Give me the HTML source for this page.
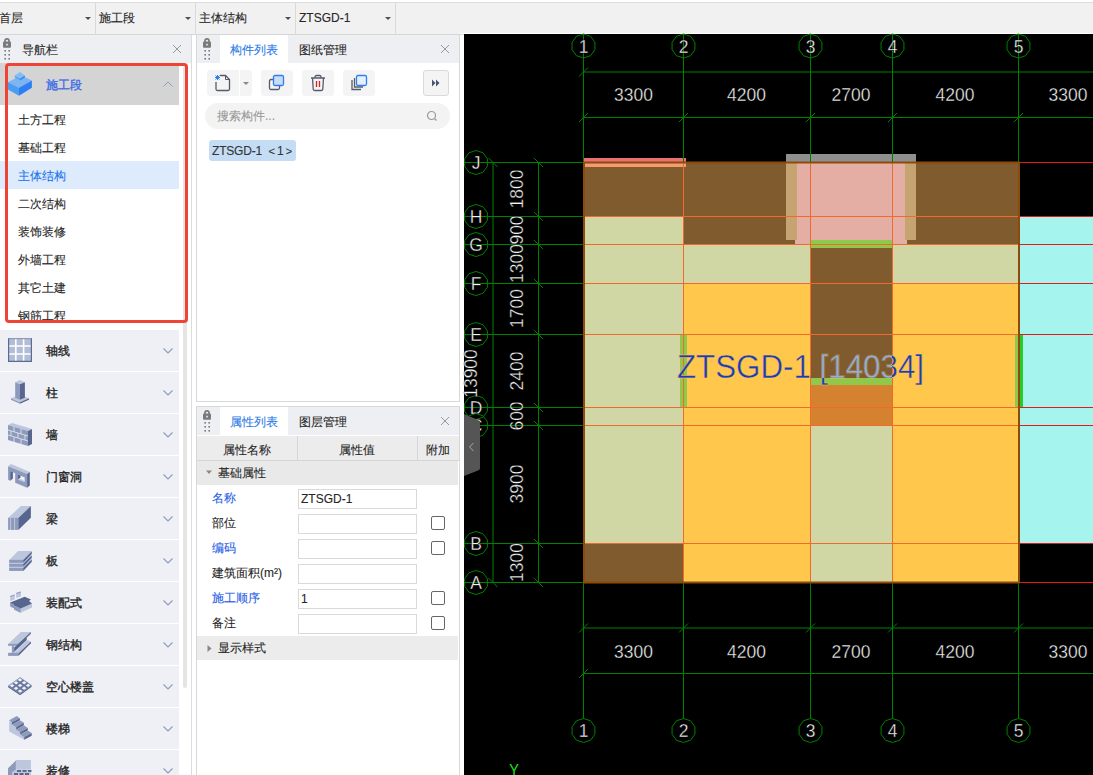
<!DOCTYPE html>
<html><head><meta charset="utf-8">
<style>
*{box-sizing:border-box;margin:0;padding:0}
html,body{width:1093px;height:775px;overflow:hidden;background:#fff;font-family:"Liberation Sans",sans-serif;font-size:12px;color:#262626;-webkit-text-stroke:0.1px}
.a{position:absolute}
.cv{position:absolute;left:0;top:0}
.tb{left:0;top:2px;width:1093px;height:33px;background:#f1f1f1;border-top:1px solid #dcdcdc;border-bottom:1px solid #d6d6d6}
.dv{top:0;width:1px;height:32px;background:#dadada}
.tt{top:0;height:32px;line-height:31px;white-space:nowrap}
.arr{width:0;height:0;border-left:3px solid transparent;border-right:3px solid transparent;border-top:3px solid #4a5060}
.hdr{height:28px;background:#eeeff2}
.lock{width:8px;height:9px}
.x{font-size:16px;color:#888;line-height:16px}
.li{left:0;width:179px;height:28px;line-height:28px;padding-top:1px;padding-left:18px;color:#262626}
.cat{left:0;width:179px;height:41px;background:#eff0f5}
.cat .t{position:absolute;left:46px;top:1px;line-height:41px;color:#262626;-webkit-text-stroke:0.35px #262626}
.chev{position:absolute;left:163px;width:10px;height:6px}
.btn{background:#f4f4f4;border-radius:3px}
.row{left:197px;width:262px;height:25px}
.lbl{position:absolute;left:15px;top:1px;line-height:25px}
.inp{position:absolute;left:101px;top:4px;width:119px;height:20px;border:1px solid #d9d9d9;background:#fff;line-height:19px;padding-left:2px}
.cb{position:absolute;left:234px;top:6px;width:14px;height:14px;border:1px solid #666;border-radius:2px;background:#fff}
.blue{color:#2a5fe6}
</style></head><body>
<!-- toolbar -->
<div class="a tb">
  <div class="a tt" style="left:-1px">首层</div>
  <div class="a arr" style="left:85px;top:14px"></div>
  <div class="a dv" style="left:95px"></div>
  <div class="a tt" style="left:99px">施工段</div>
  <div class="a arr" style="left:185px;top:14px"></div>
  <div class="a dv" style="left:195px"></div>
  <div class="a tt" style="left:199px">主体结构</div>
  <div class="a arr" style="left:285px;top:14px"></div>
  <div class="a dv" style="left:295px"></div>
  <div class="a tt" style="left:299px">ZTSGD-1</div>
  <div class="a arr" style="left:385px;top:14px"></div>
  <div class="a dv" style="left:395px"></div>
</div>

<!-- nav panel -->
<div class="a" style="left:191px;top:35px;width:1px;height:740px;background:#dcdcdc"></div>
<div class="a hdr" style="left:0;top:35px;width:191px"></div>
<svg class="a" style="left:2px;top:37px" width="12" height="26" viewBox="0 0 12 26">
 <path d="M3,5 V3.8 A2,2 0 0 1 7,3.8 V5" fill="none" stroke="#7a7a7a" stroke-width="1.7"/>
 <rect x="1" y="4.5" width="8" height="6.2" rx="1" fill="#7a7a7a"/><rect x="4.2" y="6.8" width="1.6" height="1.6" fill="#eee"/>
 <g fill="#7a7a7a"><rect x="2.4" y="13" width="1.6" height="1.6"/><rect x="6.4" y="13" width="1.6" height="1.6"/><rect x="2.4" y="17" width="1.6" height="1.6"/><rect x="6.4" y="17" width="1.6" height="1.6"/><rect x="2.4" y="21" width="1.6" height="1.6"/><rect x="6.4" y="21" width="1.6" height="1.6"/></g>
</svg>
<div class="a" style="left:22px;top:36px;line-height:28px">导航栏</div>
<svg class="a" style="left:172px;top:44px" width="10" height="10"><path d="M1,1 L9,9 M9,1 L1,9" stroke="#999" stroke-width="1"/></svg>

<div class="a" style="left:0;top:63px;width:179px;height:42px;background:#d4d4d4"></div>
<svg class="a" style="left:8px;top:72px" width="25" height="25" viewBox="0 0 25 25">
 <polygon points="0,10.3 12.9,3.2 23.9,8.6 11,15.7" fill="#7cb5f1"/>
 <polygon points="0,10.3 11,15.7 11,23.8 0,17.4" fill="#4c9cf1"/>
 <polygon points="11,15.7 23.9,8.6 23.9,15.7 11,23.8" fill="#2c7ff2"/>
 <polygon points="6.8,3.5 12,0 16.8,3.5 12,6.7" fill="#86bcf4"/>
 <polygon points="6.8,3.5 12,6.7 12,8.6 6.8,5.4" fill="#5aa4f2"/>
 <polygon points="12,6.7 16.8,3.5 16.8,5.4 12,8.6" fill="#3385f1"/>
</svg>
<div class="a" style="left:46px;top:64px;line-height:42px;color:#3d6ce6;font-size:12px;-webkit-text-stroke:0.35px #3d6ce6">施工段</div>
<svg class="a chev" style="top:81px" viewBox="0 0 10 6"><path d="M0.5,5.5 L5,1 L9.5,5.5" fill="none" stroke="#8c9cbc" stroke-width="1"/></svg>

<div class="a li" style="top:105px">土方工程</div>
<div class="a li" style="top:133px">基础工程</div>
<div class="a li" style="top:161px;background:#ddebfd;color:#1b72ee">主体结构</div>
<div class="a li" style="top:189px">二次结构</div>
<div class="a li" style="top:217px">装饰装修</div>
<div class="a li" style="top:245px">外墙工程</div>
<div class="a li" style="top:273px">其它土建</div>
<div class="a" style="left:0;top:301px;width:179px;height:21px;overflow:hidden"><div class="li" style="position:absolute;top:0">钢筋工程</div></div>

<div class="a" style="left:183px;top:66px;width:4px;height:622px;background:#e5e5e5;border-radius:2px"></div>

<div class="a cat" style="top:330px"><svg class="a" style="left:8px;top:8px" width="25" height="25" viewBox="0 0 25 25"><rect x="0" y="0" width="23.5" height="24" fill="#b3bdd6"/><path d="M7.8,1 V23 M15.6,1 V23 M1,8 H23 M1,16 H23" stroke="#fff" stroke-width="1.6"/><path d="M0.6,0 V23.4 H23.4 V0" stroke="#5a6a94" stroke-width="1.2" fill="none"/><path d="M0.6,0.6 H23.4" stroke="#8d9abb" stroke-width="1.2"/></svg><div class="t">轴线</div><svg class="chev" style="top:18px" viewBox="0 0 10 6"><path d="M0.5,0.5 L5,5 L9.5,0.5" fill="none" stroke="#8c9cbc" stroke-width="1.1"/></svg></div>
<div class="a cat" style="top:372px"><svg class="a" style="left:8px;top:8px" width="25" height="25" viewBox="0 0 25 25"><polygon points="3,18.3 11.9,14.8 21,18.3 11.9,22.2" fill="#bcc6dc"/><polygon points="3,18.3 11.9,22.2 11.9,23.7 3,19.8" fill="#8d9abb"/><polygon points="11.9,22.2 21,18.3 21,19.8 11.9,23.7" fill="#56668f"/><polygon points="7.2,2.2 11.9,0.1 16.9,2.2 11.9,4.3" fill="#bcc6dc"/><polygon points="7.2,2.2 11.9,4.3 11.9,19.8 7.2,17.7" fill="#8d9abb"/><polygon points="11.9,4.3 16.9,2.2 16.9,17.7 11.9,19.8" fill="#56668f"/></svg><div class="t">柱</div><svg class="chev" style="top:18px" viewBox="0 0 10 6"><path d="M0.5,0.5 L5,5 L9.5,0.5" fill="none" stroke="#8c9cbc" stroke-width="1.1"/></svg></div>
<div class="a cat" style="top:414px"><svg class="a" style="left:8px;top:8px" width="25" height="25" viewBox="0 0 25 25"><polygon points="0,3 4,1 24,7 20,9" fill="#bcc6dc"/><polygon points="0,3 20,9 20,24 0,18" fill="#8d9abb"/><polygon points="20,9 24,7 24,22 20,24" fill="#56668f"/><path d="M0,8 L20,14 M0,13 L20,19 M6,5 V10 M13,7 V12 M3,9 V14 M10,11 V16 M17,13 V18 M6,15 V20 M13,17 V22" stroke="#dfe3ee" stroke-width="0.9"/></svg><div class="t">墙</div><svg class="chev" style="top:18px" viewBox="0 0 10 6"><path d="M0.5,0.5 L5,5 L9.5,0.5" fill="none" stroke="#8c9cbc" stroke-width="1.1"/></svg></div>
<div class="a cat" style="top:456px"><svg class="a" style="left:8px;top:8px" width="25" height="25" viewBox="0 0 25 25"><polygon points="0.1,2.2 3,0.1 21.8,8 19.1,10" fill="#bcc6dc"/><polygon points="0.1,2.2 19.1,10 19.1,23.7 7.2,18.7 7.2,9.2 2.2,7.2 2.2,16.7 0.1,15.8" fill="#8d9abb"/><polygon points="2.2,7.2 4.9,8.3 4.9,14.6 2.2,16.7" fill="#56668f"/><polygon points="19.1,10 21.8,8 21.8,21.6 19.1,23.7" fill="#56668f"/><polygon points="10,10.5 16.7,13.4 16.7,17.9 10,15.4" fill="#eef0f5"/><polygon points="10,10.5 12.5,11.6 12.5,13.6 10,15.4" fill="#56668f"/><polygon points="10,15.4 16.7,17.9 16.7,17 12.5,15" fill="#bcc6dc"/></svg><div class="t">门窗洞</div><svg class="chev" style="top:18px" viewBox="0 0 10 6"><path d="M0.5,0.5 L5,5 L9.5,0.5" fill="none" stroke="#8c9cbc" stroke-width="1.1"/></svg></div>
<div class="a cat" style="top:498px"><svg class="a" style="left:8px;top:8px" width="25" height="25" viewBox="0 0 25 25"><polygon points="0.1,11.9 12.9,0.1 22.9,0.1 10.3,11.9" fill="#bcc6dc"/><rect x="0.1" y="11.9" width="10.2" height="12" fill="#8d9abb"/><path d="M2.6,12 V24 M6.6,12 V24" stroke="#c3cbe0" stroke-width="0.9"/><polygon points="10.3,11.9 22.9,0.1 22.9,11.7 10.3,23.9" fill="#56668f"/></svg><div class="t">梁</div><svg class="chev" style="top:18px" viewBox="0 0 10 6"><path d="M0.5,0.5 L5,5 L9.5,0.5" fill="none" stroke="#8c9cbc" stroke-width="1.1"/></svg></div>
<div class="a cat" style="top:540px"><svg class="a" style="left:8px;top:8px" width="25" height="25" viewBox="0 0 25 25"><polygon points="1.2,11.9 10,3 23.7,3 15.2,11.9" fill="#bcc6dc"/><rect x="1.2" y="11.9" width="14" height="11" fill="#bcc6dc"/><rect x="1.2" y="11.9" width="14" height="2.9" fill="#8d9abb"/><rect x="1.2" y="16" width="14" height="2.7" fill="#8d9abb"/><rect x="1.2" y="20" width="14" height="2.9" fill="#8d9abb"/><polygon points="15.2,11.9 23.7,3 23.7,14 15.2,22.9" fill="#bcc6dc"/><polygon points="15.2,11.9 23.7,3.5 23.7,5.8 15.2,14.8" fill="#56668f"/><polygon points="15.2,16 23.7,7.6 23.7,9.8 15.2,18.7" fill="#56668f"/><polygon points="15.2,20 23.7,11.6 23.7,13.8 15.2,22.9" fill="#56668f"/></svg><div class="t">板</div><svg class="chev" style="top:18px" viewBox="0 0 10 6"><path d="M0.5,0.5 L5,5 L9.5,0.5" fill="none" stroke="#8c9cbc" stroke-width="1.1"/></svg></div>
<div class="a cat" style="top:582px"><svg class="a" style="left:8px;top:8px" width="25" height="25" viewBox="0 0 25 25"><polygon points="2.2,6 6.7,4.5 6.7,9.5 2.2,11" fill="#bcc6dc"/><polygon points="2.2,6 4.5,5.2 6.7,4.5 6.7,5.5 2.2,7" fill="#8d9abb"/><polygon points="8.2,3 12.9,1.5 12.9,6.5 8.2,8" fill="#bcc6dc"/><polygon points="8.2,3 12.9,1.5 12.9,2.5 8.2,4" fill="#8d9abb"/><polygon points="2.2,12.5 2.2,16.5 6,18.2 6,19.6 12.5,22.8 24,17.5 24,13.5" fill="#bcc6dc"/><polygon points="2.2,12.5 16.7,6.7 23,9.5 21,11 24,13.5 12.5,18.5 6,15.5 6,16" fill="#56668f"/><polygon points="2.2,12.5 6,14.2 6,18.2 2.2,16.5" fill="#8d9abb"/><polygon points="6,15.5 12.5,18.5 12.5,22.8 6,19.6" fill="#8d9abb"/></svg><div class="t">装配式</div><svg class="chev" style="top:18px" viewBox="0 0 10 6"><path d="M0.5,0.5 L5,5 L9.5,0.5" fill="none" stroke="#8c9cbc" stroke-width="1.1"/></svg></div>
<div class="a cat" style="top:624px"><svg class="a" style="left:8px;top:8px" width="25" height="25" viewBox="0 0 25 25"><polygon points="0.1,11.9 12.9,0.1 22.9,0.1 10,11.9" fill="#bcc6dc"/><rect x="0.1" y="11.9" width="9.9" height="1.9" fill="#8d9abb"/><polygon points="10,11.9 22.9,0.1 22.9,1.7 10,13.8" fill="#56668f"/><rect x="3.9" y="13.8" width="2.2" height="7" fill="#8d9abb"/><polygon points="6.1,15.4 18.7,5.1 18.7,8 6.1,20" fill="#56668f"/><polygon points="6.1,20.8 18.7,8 22.9,9.6 10.3,21.4" fill="#bcc6dc"/><rect x="0.1" y="20.8" width="10.2" height="3.1" fill="#8d9abb"/><polygon points="10.3,21.4 22.9,9.6 22.9,11.2 10.3,23.9" fill="#56668f"/></svg><div class="t">钢结构</div><svg class="chev" style="top:18px" viewBox="0 0 10 6"><path d="M0.5,0.5 L5,5 L9.5,0.5" fill="none" stroke="#8c9cbc" stroke-width="1.1"/></svg></div>
<div class="a cat" style="top:666px"><svg class="a" style="left:8px;top:8px" width="25" height="25" viewBox="0 0 25 25"><polygon points="0.1,11.7 12.1,3.2 23.7,11.3 12.1,19.8" fill="#6a79a0"/><polygon points="0.1,11.7 12.1,19.8 12.1,21.3 0.1,13.2" fill="#56668f"/><polygon points="12.1,19.8 23.7,11.3 23.7,12.8 12.1,21.3" fill="#56668f"/><polygon points="0.1,11.7 12.1,3.2 12.1,4.5 1.5,11.7" fill="#a8b3cf"/><polygon points="1.78,11.67 4.10,10.03 6.42,11.59 4.10,13.24" fill="#f2f3f7"/><polygon points="5.78,14.37 8.10,12.73 10.42,14.29 8.10,15.94" fill="#f2f3f7"/><polygon points="9.78,17.07 12.10,15.43 14.42,16.99 12.10,18.64" fill="#f2f3f7"/><polygon points="5.78,8.84 8.10,7.20 10.42,8.76 8.10,10.40" fill="#f2f3f7"/><polygon points="9.78,11.54 12.10,9.90 14.42,11.46 12.10,13.10" fill="#f2f3f7"/><polygon points="13.78,14.24 16.10,12.60 18.42,14.16 16.10,15.80" fill="#f2f3f7"/><polygon points="9.78,6.01 12.10,4.36 14.42,5.93 12.10,7.57" fill="#f2f3f7"/><polygon points="13.78,8.71 16.10,7.06 18.42,8.63 16.10,10.27" fill="#f2f3f7"/><polygon points="17.78,11.41 20.10,9.76 22.42,11.33 20.10,12.97" fill="#f2f3f7"/></svg><div class="t">空心楼盖</div><svg class="chev" style="top:18px" viewBox="0 0 10 6"><path d="M0.5,0.5 L5,5 L9.5,0.5" fill="none" stroke="#8c9cbc" stroke-width="1.1"/></svg></div>
<div class="a cat" style="top:708px"><svg class="a" style="left:8px;top:8px" width="25" height="25" viewBox="0 0 25 25"><polygon points="1.2,4.3 3.9,6.1 3.9,8.8 8.2,11.3 8.2,13.8 12.1,16.2 12.1,18.5 16.2,21.2 16.2,23.7 1.2,15.4" fill="#bcc6dc"/><polygon points="1.2,4.3 8.8,0.1 11.9,2.2 3.9,6.3" fill="#8d9abb"/><polygon points="3.9,6.3 11.9,2.2 11.9,4.3 3.9,8.8" fill="#56668f"/><polygon points="3.9,8.8 11.9,4.3 15.8,6.7 8.2,11.3" fill="#8d9abb"/><polygon points="8.2,11.3 15.8,6.7 15.8,9.2 8.2,13.8" fill="#56668f"/><polygon points="8.2,13.8 15.8,9.2 19.8,12.1 12.1,16.2" fill="#8d9abb"/><polygon points="12.1,16.2 19.8,12.1 19.8,14.6 12.1,18.5" fill="#56668f"/><polygon points="12.1,18.5 19.8,14.6 23.7,17.1 16.2,21.2" fill="#8d9abb"/><polygon points="16.2,21.2 23.7,17.1 23.7,19.8 16.2,23.7" fill="#56668f"/></svg><div class="t">楼梯</div><svg class="chev" style="top:18px" viewBox="0 0 10 6"><path d="M0.5,0.5 L5,5 L9.5,0.5" fill="none" stroke="#8c9cbc" stroke-width="1.1"/></svg></div>
<div class="a cat" style="top:750px"><svg class="a" style="left:8px;top:8px" width="25" height="25" viewBox="0 0 25 25"><rect x="7.9" y="2" width="15" height="9.4" fill="#bcc6dc"/><polygon points="0,10.2 7.9,2.6 7.9,25 0,25" fill="#8d9abb"/><polygon points="4,14 7.9,11.4 23,11.4 22.9,14 " fill="#bcc6dc"/><rect x="4" y="14" width="19" height="11" fill="#bcc6dc"/><g fill="#56668f"><rect x="9" y="12" width="4" height="1.9"/><rect x="14.5" y="12" width="4" height="1.9"/><rect x="20" y="12" width="3.5" height="1.9"/><rect x="6" y="15" width="4" height="2"/><rect x="11.5" y="15" width="4" height="2"/><rect x="17" y="15" width="4" height="2"/></g></svg><div class="t">装修</div><svg class="chev" style="top:18px" viewBox="0 0 10 6"><path d="M0.5,0.5 L5,5 L9.5,0.5" fill="none" stroke="#8c9cbc" stroke-width="1.1"/></svg></div>

<div class="a" style="left:5px;top:63px;width:183px;height:260px;border:3px solid #ee4436;border-radius:4px"></div>

<!-- middle panel: component list -->
<div class="a" style="left:196px;top:35px;width:264px;height:367px;border:1px solid #d8d8d8;border-top:none"></div>
<div class="a hdr" style="left:197px;top:35px;width:262px"></div>
<div class="a" style="left:220px;top:35px;width:68px;height:28px;background:#fff"></div>
<svg class="a" style="left:202px;top:37px" width="12" height="26" viewBox="0 0 12 26">
 <path d="M3,5 V3.8 A2,2 0 0 1 7,3.8 V5" fill="none" stroke="#7a7a7a" stroke-width="1.7"/>
 <rect x="1" y="4.5" width="8" height="6.2" rx="1" fill="#7a7a7a"/><rect x="4.2" y="6.8" width="1.6" height="1.6" fill="#eee"/>
 <g fill="#7a7a7a"><rect x="2.4" y="13" width="1.6" height="1.6"/><rect x="6.4" y="13" width="1.6" height="1.6"/><rect x="2.4" y="17" width="1.6" height="1.6"/><rect x="6.4" y="17" width="1.6" height="1.6"/><rect x="2.4" y="21" width="1.6" height="1.6"/><rect x="6.4" y="21" width="1.6" height="1.6"/></g>
</svg>
<div class="a" style="left:230px;top:36px;line-height:28px;color:#2a7ae6">构件列表</div>
<div class="a" style="left:299px;top:36px;line-height:28px">图纸管理</div>
<svg class="a" style="left:440px;top:44px" width="10" height="10"><path d="M1,1 L9,9 M9,1 L1,9" stroke="#999" stroke-width="1"/></svg>

<div class="a btn" style="left:207px;top:70px;width:32px;height:26px;border-radius:3px 0 0 3px"></div>
<div class="a btn" style="left:240px;top:70px;width:12px;height:26px;border-radius:0 3px 3px 0"></div>
<div class="a arr" style="left:243px;top:82px;border-top-color:#888"></div>
<svg class="a" style="left:214px;top:74px" width="18" height="18" viewBox="0 0 18 18">
 <path d="M6,1.5 H11.5 L15.5,5.5 V15 A1.5,1.5 0 0 1 14,16.5 H3.5 A1.5,1.5 0 0 1 2,15 V8" fill="none" stroke="#545c6c" stroke-width="1.3"/>
 <path d="M11.5,1.5 V5.5 H15.5" fill="none" stroke="#545c6c" stroke-width="1"/>
 <g stroke="#2d7ef0" stroke-width="1"><path d="M1.5,1.5 L5.5,5.5 M5.5,1.5 L1.5,5.5 M3.5,1 V6 M1,3.5 H6"/></g>
</svg>
<div class="a btn" style="left:261px;top:70px;width:32px;height:26px"></div>
<svg class="a" style="left:268px;top:74px" width="18" height="18" viewBox="0 0 18 18">
 <rect x="1.5" y="5.5" width="10" height="10" rx="1.5" fill="none" stroke="#545c6c" stroke-width="1.3"/>
 <rect x="5.5" y="1.5" width="10" height="10" rx="1.5" fill="#c8dcf4" stroke="#2d7ef0" stroke-width="1.3"/>
</svg>
<div class="a btn" style="left:302px;top:70px;width:32px;height:26px"></div>
<svg class="a" style="left:309px;top:74px" width="18" height="18" viewBox="0 0 18 18">
 <path d="M2,4 H16 M6,4 V3 A1.5,1.5 0 0 1 7.5,1.5 H10.5 A1.5,1.5 0 0 1 12,3 V4 M3.5,4 L4.2,15 A1.5,1.5 0 0 0 5.7,16.5 H12.3 A1.5,1.5 0 0 0 13.8,15 L14.5,4" fill="none" stroke="#545c6c" stroke-width="1.3"/>
 <path d="M7.5,7 V13 M10.5,7 V13" stroke="#e02020" stroke-width="1.3"/>
</svg>
<div class="a btn" style="left:343px;top:70px;width:32px;height:26px"></div>
<svg class="a" style="left:350px;top:74px" width="18" height="18" viewBox="0 0 18 18">
 <path d="M2,6 V15.5 H11" fill="none" stroke="#545c6c" stroke-width="1.3"/>
 <path d="M4.5,4 V13 H13" fill="none" stroke="#545c6c" stroke-width="1.3"/>
 <rect x="6.5" y="1.5" width="10" height="10" rx="1.5" fill="#e6f0fc" stroke="#2d7ef0" stroke-width="1.3"/>
</svg>
<div class="a btn" style="left:423px;top:70px;width:26px;height:26px;border:1px solid #dadada"></div>
<svg class="a" style="left:431px;top:78px" width="10" height="10" viewBox="0 0 10 10"><path d="M1,1.5 L4.5,5 L1,8.5Z M5,1.5 L8.5,5 L5,8.5Z" fill="#4a5470"/></svg>

<div class="a" style="left:205px;top:103px;width:245px;height:26px;border-radius:13px;background:#f3f3f3"></div>
<div class="a" style="left:217px;top:103px;line-height:26px;color:#999">搜索构件...</div>
<svg class="a" style="left:426px;top:110px" width="12" height="12" viewBox="0 0 12 12"><circle cx="5.5" cy="5.5" r="4" fill="none" stroke="#999" stroke-width="1.2"/><path d="M8.5,8.5 L10.5,10.5" stroke="#999" stroke-width="1.2"/></svg>

<div class="a" style="left:209px;top:140px;width:87px;height:21px;border-radius:3px;background:#c5dcf5;line-height:22px;padding-left:3px;color:#333;white-space:nowrap"><span style="letter-spacing:-0.2px">ZTSGD-1</span>&nbsp;&nbsp;<span style="font-size:11px;margin-right:2px">&lt;</span>1<span style="font-size:11px;margin-left:2px">&gt;</span></div>

<!-- property panel -->
<div class="a" style="left:196px;top:406px;width:264px;height:380px;border:1px solid #d8d8d8"></div>
<div class="a hdr" style="left:197px;top:407px;width:262px"></div>
<div class="a" style="left:220px;top:407px;width:68px;height:28px;background:#fff"></div>
<svg class="a" style="left:202px;top:409px" width="12" height="26" viewBox="0 0 12 26">
 <path d="M3,5 V3.8 A2,2 0 0 1 7,3.8 V5" fill="none" stroke="#7a7a7a" stroke-width="1.7"/>
 <rect x="1" y="4.5" width="8" height="6.2" rx="1" fill="#7a7a7a"/><rect x="4.2" y="6.8" width="1.6" height="1.6" fill="#eee"/>
 <g fill="#7a7a7a"><rect x="2.4" y="13" width="1.6" height="1.6"/><rect x="6.4" y="13" width="1.6" height="1.6"/><rect x="2.4" y="17" width="1.6" height="1.6"/><rect x="6.4" y="17" width="1.6" height="1.6"/><rect x="2.4" y="21" width="1.6" height="1.6"/><rect x="6.4" y="21" width="1.6" height="1.6"/></g>
</svg>
<div class="a" style="left:230px;top:408px;line-height:28px;color:#2a7ae6">属性列表</div>
<div class="a" style="left:299px;top:408px;line-height:28px">图层管理</div>
<svg class="a" style="left:440px;top:416px" width="10" height="10"><path d="M1,1 L9,9 M9,1 L1,9" stroke="#999" stroke-width="1"/></svg>

<div class="a" style="left:197px;top:435px;width:262px;height:1px;background:#fff"></div><div class="a" style="left:197px;top:436px;width:262px;height:25px;background:#ececec;border-bottom:1px solid #d4d4d4"></div>
<div class="a" style="left:297px;top:436px;width:1px;height:24px;background:#d6d6d6"></div>
<div class="a" style="left:417px;top:436px;width:1px;height:24px;background:#d6d6d6"></div>
<div class="a" style="left:197px;top:438px;width:100px;line-height:24px;text-align:center">属性名称</div>
<div class="a" style="left:297px;top:438px;width:120px;line-height:24px;text-align:center">属性值</div>
<div class="a" style="left:417px;top:438px;width:42px;line-height:24px;text-align:center">附加</div>

<div class="a row" style="top:461px;height:24px;width:261px;background:#e9e9e9"><svg class="a" style="left:9px;top:9px" width="6" height="5"><path d="M0,0.5 H6 L3,4Z" fill="#888"/></svg><div class="lbl" style="left:21px;top:0;line-height:24px">基础属性</div></div>
<div class="a row" style="top:485px"><div class="lbl blue">名称</div><div class="inp">ZTSGD-1</div></div>
<div class="a row" style="top:510px"><div class="lbl">部位</div><div class="inp"></div><div class="cb"></div></div>
<div class="a row" style="top:535px"><div class="lbl blue">编码</div><div class="inp"></div><div class="cb"></div></div>
<div class="a row" style="top:560px"><div class="lbl">建筑面积(m²)</div><div class="inp"></div></div>
<div class="a row" style="top:585px"><div class="lbl blue">施工顺序</div><div class="inp">1</div><div class="cb"></div></div>
<div class="a row" style="top:610px"><div class="lbl">备注</div><div class="inp"></div><div class="cb"></div></div>
<div class="a row" style="top:636px;height:24px;width:261px;background:#ececec"><svg class="a" style="left:10px;top:9px" width="5" height="7"><path d="M0.5,0 V7 L4.5,3.5Z" fill="#888"/></svg><div class="lbl" style="left:21px;top:0;line-height:24px">显示样式</div></div>

<svg class="cv" width="1093" height="775" viewBox="0 0 1093 775"><defs><clipPath id="cc"><rect x="460" y="33" width="633" height="742"/></clipPath></defs><g clip-path="url(#cc)"><rect x="460" y="33" width="633" height="1" fill="#fff"/><rect x="464" y="34" width="629" height="741" fill="#000"/><rect x="583" y="162" width="100" height="54" fill="#7f5b2e"/><rect x="583" y="216" width="100" height="327" fill="#d0d6a4"/><rect x="583" y="543" width="100" height="40" fill="#7f5b2e"/><rect x="683" y="162" width="127" height="82" fill="#7f5b2e"/><rect x="683" y="244" width="127" height="39" fill="#d0d6a4"/><rect x="683" y="283" width="127" height="300" fill="#ffc84d"/><rect x="810" y="162" width="82" height="86" fill="#7f5b2e"/><rect x="810" y="248" width="82" height="130" fill="#7f5b2e"/><rect x="810" y="378" width="82" height="7" fill="#8fc84a"/><rect x="810" y="385" width="82" height="40" fill="#d4822f"/><rect x="810" y="425" width="82" height="158" fill="#d0d6a4"/><rect x="892" y="162" width="127" height="82" fill="#7f5b2e"/><rect x="892" y="244" width="127" height="39" fill="#d0d6a4"/><rect x="892" y="283" width="127" height="300" fill="#ffc84d"/><rect x="1019" y="216" width="74" height="327" fill="#a6f4ee"/><rect x="786" y="154" width="130" height="8" fill="#8f8f8f"/><rect x="795" y="162" width="112" height="82" fill="#e4aea5"/><rect x="786" y="162" width="11" height="78" fill="#c5a472"/><rect x="905" y="162" width="11" height="78" fill="#c5a472"/><rect x="810" y="240" width="82" height="8" fill="#8fc84a"/><rect x="584" y="158" width="102" height="4" fill="#e87272"/><rect x="585" y="163" width="101" height="4" fill="#f59b72"/><rect x="680" y="335" width="7" height="72" fill="#8fc84a"/><rect x="1015" y="335" width="3" height="72" fill="#8fc84a"/><rect x="1020" y="335" width="3" height="72" fill="#25cc25"/><line x1="583" y1="216.5" x2="1019" y2="216.5" stroke="#f06a30" stroke-width="1"/><line x1="583" y1="244.5" x2="1019" y2="244.5" stroke="#f06a30" stroke-width="1"/><line x1="583" y1="283.5" x2="1019" y2="283.5" stroke="#f06a30" stroke-width="1"/><line x1="583" y1="334.5" x2="1019" y2="334.5" stroke="#f06a30" stroke-width="1"/><line x1="583" y1="407.5" x2="1019" y2="407.5" stroke="#f06a30" stroke-width="1"/><line x1="583" y1="425.5" x2="1019" y2="425.5" stroke="#f06a30" stroke-width="1"/><line x1="583" y1="543.5" x2="1019" y2="543.5" stroke="#f06a30" stroke-width="1"/><line x1="683.5" y1="162" x2="683.5" y2="583" stroke="#f06a30" stroke-width="1"/><line x1="810.5" y1="162" x2="810.5" y2="583" stroke="#f06a30" stroke-width="1"/><line x1="892.5" y1="162" x2="892.5" y2="583" stroke="#f06a30" stroke-width="1"/><line x1="1020" y1="162.5" x2="1093" y2="162.5" stroke="#e81818" stroke-width="1"/><line x1="1020" y1="216.5" x2="1093" y2="216.5" stroke="#e81818" stroke-width="1"/><line x1="1020" y1="244.5" x2="1093" y2="244.5" stroke="#e81818" stroke-width="1"/><line x1="1020" y1="283.5" x2="1093" y2="283.5" stroke="#e81818" stroke-width="1"/><line x1="1020" y1="334.5" x2="1093" y2="334.5" stroke="#e81818" stroke-width="1"/><line x1="1020" y1="407.5" x2="1093" y2="407.5" stroke="#e81818" stroke-width="1"/><line x1="1020" y1="425.5" x2="1093" y2="425.5" stroke="#e81818" stroke-width="1"/><line x1="1020" y1="543.5" x2="1093" y2="543.5" stroke="#e81818" stroke-width="1"/><line x1="1020" y1="582.5" x2="1093" y2="582.5" stroke="#e81818" stroke-width="1"/><rect x="584" y="162.5" width="435" height="420" fill="none" stroke="#8e4a0a" stroke-width="2"/><line x1="583.5" y1="34" x2="583.5" y2="162" stroke="#008000" stroke-width="1"/><line x1="583.5" y1="583" x2="583.5" y2="718.5" stroke="#008000" stroke-width="1"/><line x1="683.5" y1="34" x2="683.5" y2="162" stroke="#008000" stroke-width="1"/><line x1="683.5" y1="583" x2="683.5" y2="718.5" stroke="#008000" stroke-width="1"/><line x1="810.5" y1="34" x2="810.5" y2="162" stroke="#008000" stroke-width="1"/><line x1="810.5" y1="583" x2="810.5" y2="718.5" stroke="#008000" stroke-width="1"/><line x1="892.5" y1="34" x2="892.5" y2="162" stroke="#008000" stroke-width="1"/><line x1="892.5" y1="583" x2="892.5" y2="718.5" stroke="#008000" stroke-width="1"/><line x1="1018.5" y1="34" x2="1018.5" y2="162" stroke="#008000" stroke-width="1"/><line x1="1018.5" y1="583" x2="1018.5" y2="718.5" stroke="#008000" stroke-width="1"/><line x1="464" y1="162.5" x2="583" y2="162.5" stroke="#008000" stroke-width="1"/><line x1="464" y1="216.5" x2="583" y2="216.5" stroke="#008000" stroke-width="1"/><line x1="464" y1="244.5" x2="583" y2="244.5" stroke="#008000" stroke-width="1"/><line x1="464" y1="283.5" x2="583" y2="283.5" stroke="#008000" stroke-width="1"/><line x1="464" y1="334.5" x2="583" y2="334.5" stroke="#008000" stroke-width="1"/><line x1="464" y1="407.5" x2="583" y2="407.5" stroke="#008000" stroke-width="1"/><line x1="464" y1="425.5" x2="583" y2="425.5" stroke="#008000" stroke-width="1"/><line x1="464" y1="543.5" x2="583" y2="543.5" stroke="#008000" stroke-width="1"/><line x1="464" y1="582.5" x2="583" y2="582.5" stroke="#008000" stroke-width="1"/><line x1="583" y1="72" x2="1093" y2="72" stroke="#008000" stroke-width="1"/><line x1="583" y1="117.5" x2="1093" y2="117.5" stroke="#008000" stroke-width="1"/><line x1="583" y1="628" x2="1093" y2="628" stroke="#008000" stroke-width="1"/><line x1="583" y1="673.5" x2="1093" y2="673.5" stroke="#008000" stroke-width="1"/><line x1="493" y1="162" x2="493" y2="583" stroke="#008000" stroke-width="1"/><line x1="538.5" y1="162" x2="538.5" y2="583" stroke="#008000" stroke-width="1"/><line x1="579.0" y1="76.5" x2="588.0" y2="67.5" stroke="#008000" stroke-width="1"/><line x1="579.0" y1="678.0" x2="588.0" y2="669.0" stroke="#008000" stroke-width="1"/><line x1="579.0" y1="122.0" x2="588.0" y2="113.0" stroke="#008000" stroke-width="1"/><line x1="579.0" y1="632.5" x2="588.0" y2="623.5" stroke="#008000" stroke-width="1"/><line x1="679.0" y1="122.0" x2="688.0" y2="113.0" stroke="#008000" stroke-width="1"/><line x1="679.0" y1="632.5" x2="688.0" y2="623.5" stroke="#008000" stroke-width="1"/><line x1="806.0" y1="122.0" x2="815.0" y2="113.0" stroke="#008000" stroke-width="1"/><line x1="806.0" y1="632.5" x2="815.0" y2="623.5" stroke="#008000" stroke-width="1"/><line x1="888.0" y1="122.0" x2="897.0" y2="113.0" stroke="#008000" stroke-width="1"/><line x1="888.0" y1="632.5" x2="897.0" y2="623.5" stroke="#008000" stroke-width="1"/><line x1="1014.0" y1="122.0" x2="1023.0" y2="113.0" stroke="#008000" stroke-width="1"/><line x1="1014.0" y1="632.5" x2="1023.0" y2="623.5" stroke="#008000" stroke-width="1"/><line x1="488.5" y1="158.0" x2="497.5" y2="167.0" stroke="#008000" stroke-width="1"/><line x1="488.5" y1="578.0" x2="497.5" y2="587.0" stroke="#008000" stroke-width="1"/><line x1="534.0" y1="158.0" x2="543.0" y2="167.0" stroke="#008000" stroke-width="1"/><line x1="534.0" y1="212.0" x2="543.0" y2="221.0" stroke="#008000" stroke-width="1"/><line x1="534.0" y1="240.0" x2="543.0" y2="249.0" stroke="#008000" stroke-width="1"/><line x1="534.0" y1="279.0" x2="543.0" y2="288.0" stroke="#008000" stroke-width="1"/><line x1="534.0" y1="330.0" x2="543.0" y2="339.0" stroke="#008000" stroke-width="1"/><line x1="534.0" y1="403.0" x2="543.0" y2="412.0" stroke="#008000" stroke-width="1"/><line x1="534.0" y1="421.0" x2="543.0" y2="430.0" stroke="#008000" stroke-width="1"/><line x1="534.0" y1="539.0" x2="543.0" y2="548.0" stroke="#008000" stroke-width="1"/><line x1="534.0" y1="578.0" x2="543.0" y2="587.0" stroke="#008000" stroke-width="1"/><polygon points="583.50,34.00 590.55,36.29 594.91,42.29 594.91,49.71 590.55,55.71 583.50,58.00 576.45,55.71 572.09,49.71 572.09,42.29 576.45,36.29" fill="none" stroke="#008000" stroke-width="1"/><text transform="translate(583.5,52.8) scale(0.92,1)" font-family="Liberation Sans" fill="#f4f4f4" stroke="#000" stroke-width="0.35" font-size="19" text-anchor="middle">1</text><polygon points="583.50,718.50 590.55,720.79 594.91,726.79 594.91,734.21 590.55,740.21 583.50,742.50 576.45,740.21 572.09,734.21 572.09,726.79 576.45,720.79" fill="none" stroke="#008000" stroke-width="1"/><text transform="translate(583.5,737.3) scale(0.92,1)" font-family="Liberation Sans" fill="#f4f4f4" stroke="#000" stroke-width="0.35" font-size="19" text-anchor="middle">1</text><polygon points="683.50,34.00 690.55,36.29 694.91,42.29 694.91,49.71 690.55,55.71 683.50,58.00 676.45,55.71 672.09,49.71 672.09,42.29 676.45,36.29" fill="none" stroke="#008000" stroke-width="1"/><text transform="translate(683.5,52.8) scale(0.92,1)" font-family="Liberation Sans" fill="#f4f4f4" stroke="#000" stroke-width="0.35" font-size="19" text-anchor="middle">2</text><polygon points="683.50,718.50 690.55,720.79 694.91,726.79 694.91,734.21 690.55,740.21 683.50,742.50 676.45,740.21 672.09,734.21 672.09,726.79 676.45,720.79" fill="none" stroke="#008000" stroke-width="1"/><text transform="translate(683.5,737.3) scale(0.92,1)" font-family="Liberation Sans" fill="#f4f4f4" stroke="#000" stroke-width="0.35" font-size="19" text-anchor="middle">2</text><polygon points="810.50,34.00 817.55,36.29 821.91,42.29 821.91,49.71 817.55,55.71 810.50,58.00 803.45,55.71 799.09,49.71 799.09,42.29 803.45,36.29" fill="none" stroke="#008000" stroke-width="1"/><text transform="translate(810.5,52.8) scale(0.92,1)" font-family="Liberation Sans" fill="#f4f4f4" stroke="#000" stroke-width="0.35" font-size="19" text-anchor="middle">3</text><polygon points="810.50,718.50 817.55,720.79 821.91,726.79 821.91,734.21 817.55,740.21 810.50,742.50 803.45,740.21 799.09,734.21 799.09,726.79 803.45,720.79" fill="none" stroke="#008000" stroke-width="1"/><text transform="translate(810.5,737.3) scale(0.92,1)" font-family="Liberation Sans" fill="#f4f4f4" stroke="#000" stroke-width="0.35" font-size="19" text-anchor="middle">3</text><polygon points="892.50,34.00 899.55,36.29 903.91,42.29 903.91,49.71 899.55,55.71 892.50,58.00 885.45,55.71 881.09,49.71 881.09,42.29 885.45,36.29" fill="none" stroke="#008000" stroke-width="1"/><text transform="translate(892.5,52.8) scale(0.92,1)" font-family="Liberation Sans" fill="#f4f4f4" stroke="#000" stroke-width="0.35" font-size="19" text-anchor="middle">4</text><polygon points="892.50,718.50 899.55,720.79 903.91,726.79 903.91,734.21 899.55,740.21 892.50,742.50 885.45,740.21 881.09,734.21 881.09,726.79 885.45,720.79" fill="none" stroke="#008000" stroke-width="1"/><text transform="translate(892.5,737.3) scale(0.92,1)" font-family="Liberation Sans" fill="#f4f4f4" stroke="#000" stroke-width="0.35" font-size="19" text-anchor="middle">4</text><polygon points="1018.50,34.00 1025.55,36.29 1029.91,42.29 1029.91,49.71 1025.55,55.71 1018.50,58.00 1011.45,55.71 1007.09,49.71 1007.09,42.29 1011.45,36.29" fill="none" stroke="#008000" stroke-width="1"/><text transform="translate(1018.5,52.8) scale(0.92,1)" font-family="Liberation Sans" fill="#f4f4f4" stroke="#000" stroke-width="0.35" font-size="19" text-anchor="middle">5</text><polygon points="1018.50,718.50 1025.55,720.79 1029.91,726.79 1029.91,734.21 1025.55,740.21 1018.50,742.50 1011.45,740.21 1007.09,734.21 1007.09,726.79 1011.45,720.79" fill="none" stroke="#008000" stroke-width="1"/><text transform="translate(1018.5,737.3) scale(0.92,1)" font-family="Liberation Sans" fill="#f4f4f4" stroke="#000" stroke-width="0.35" font-size="19" text-anchor="middle">5</text><polygon points="476.00,150.50 483.05,152.79 487.41,158.79 487.41,166.21 483.05,172.21 476.00,174.50 468.95,172.21 464.59,166.21 464.59,158.79 468.95,152.79" fill="none" stroke="#008000" stroke-width="1"/><text transform="translate(476,169.3) scale(0.92,1)" font-family="Liberation Sans" fill="#f4f4f4" stroke="#000" stroke-width="0.35" font-size="19" text-anchor="middle">J</text><polygon points="476.00,204.50 483.05,206.79 487.41,212.79 487.41,220.21 483.05,226.21 476.00,228.50 468.95,226.21 464.59,220.21 464.59,212.79 468.95,206.79" fill="none" stroke="#008000" stroke-width="1"/><text transform="translate(476,223.3) scale(0.92,1)" font-family="Liberation Sans" fill="#f4f4f4" stroke="#000" stroke-width="0.35" font-size="19" text-anchor="middle">H</text><polygon points="476.00,232.50 483.05,234.79 487.41,240.79 487.41,248.21 483.05,254.21 476.00,256.50 468.95,254.21 464.59,248.21 464.59,240.79 468.95,234.79" fill="none" stroke="#008000" stroke-width="1"/><text transform="translate(476,251.3) scale(0.92,1)" font-family="Liberation Sans" fill="#f4f4f4" stroke="#000" stroke-width="0.35" font-size="19" text-anchor="middle">G</text><polygon points="476.00,271.50 483.05,273.79 487.41,279.79 487.41,287.21 483.05,293.21 476.00,295.50 468.95,293.21 464.59,287.21 464.59,279.79 468.95,273.79" fill="none" stroke="#008000" stroke-width="1"/><text transform="translate(476,290.3) scale(0.92,1)" font-family="Liberation Sans" fill="#f4f4f4" stroke="#000" stroke-width="0.35" font-size="19" text-anchor="middle">F</text><polygon points="476.00,322.50 483.05,324.79 487.41,330.79 487.41,338.21 483.05,344.21 476.00,346.50 468.95,344.21 464.59,338.21 464.59,330.79 468.95,324.79" fill="none" stroke="#008000" stroke-width="1"/><text transform="translate(476,341.3) scale(0.92,1)" font-family="Liberation Sans" fill="#f4f4f4" stroke="#000" stroke-width="0.35" font-size="19" text-anchor="middle">E</text><polygon points="476.00,395.50 483.05,397.79 487.41,403.79 487.41,411.21 483.05,417.21 476.00,419.50 468.95,417.21 464.59,411.21 464.59,403.79 468.95,397.79" fill="none" stroke="#008000" stroke-width="1"/><text transform="translate(476,414.3) scale(0.92,1)" font-family="Liberation Sans" fill="#f4f4f4" stroke="#000" stroke-width="0.35" font-size="19" text-anchor="middle">D</text><polygon points="476.00,413.50 483.05,415.79 487.41,421.79 487.41,429.21 483.05,435.21 476.00,437.50 468.95,435.21 464.59,429.21 464.59,421.79 468.95,415.79" fill="none" stroke="#008000" stroke-width="1"/><text transform="translate(476,432.3) scale(0.92,1)" font-family="Liberation Sans" fill="#f4f4f4" stroke="#000" stroke-width="0.35" font-size="19" text-anchor="middle">C</text><polygon points="476.00,531.50 483.05,533.79 487.41,539.79 487.41,547.21 483.05,553.21 476.00,555.50 468.95,553.21 464.59,547.21 464.59,539.79 468.95,533.79" fill="none" stroke="#008000" stroke-width="1"/><text transform="translate(476,550.3) scale(0.92,1)" font-family="Liberation Sans" fill="#f4f4f4" stroke="#000" stroke-width="0.35" font-size="19" text-anchor="middle">B</text><polygon points="476.00,570.50 483.05,572.79 487.41,578.79 487.41,586.21 483.05,592.21 476.00,594.50 468.95,592.21 464.59,586.21 464.59,578.79 468.95,572.79" fill="none" stroke="#008000" stroke-width="1"/><text transform="translate(476,589.3) scale(0.92,1)" font-family="Liberation Sans" fill="#f4f4f4" stroke="#000" stroke-width="0.35" font-size="19" text-anchor="middle">A</text><text transform="translate(633.5,101) scale(0.92,1)" font-family="Liberation Sans" fill="#f4f4f4" stroke="#000" stroke-width="0.35" font-size="19" text-anchor="middle">3300</text><text transform="translate(633.5,657.5) scale(0.92,1)" font-family="Liberation Sans" fill="#f4f4f4" stroke="#000" stroke-width="0.35" font-size="19" text-anchor="middle">3300</text><text transform="translate(746.5,101) scale(0.92,1)" font-family="Liberation Sans" fill="#f4f4f4" stroke="#000" stroke-width="0.35" font-size="19" text-anchor="middle">4200</text><text transform="translate(746.5,657.5) scale(0.92,1)" font-family="Liberation Sans" fill="#f4f4f4" stroke="#000" stroke-width="0.35" font-size="19" text-anchor="middle">4200</text><text transform="translate(851,101) scale(0.92,1)" font-family="Liberation Sans" fill="#f4f4f4" stroke="#000" stroke-width="0.35" font-size="19" text-anchor="middle">2700</text><text transform="translate(851,657.5) scale(0.92,1)" font-family="Liberation Sans" fill="#f4f4f4" stroke="#000" stroke-width="0.35" font-size="19" text-anchor="middle">2700</text><text transform="translate(955,101) scale(0.92,1)" font-family="Liberation Sans" fill="#f4f4f4" stroke="#000" stroke-width="0.35" font-size="19" text-anchor="middle">4200</text><text transform="translate(955,657.5) scale(0.92,1)" font-family="Liberation Sans" fill="#f4f4f4" stroke="#000" stroke-width="0.35" font-size="19" text-anchor="middle">4200</text><text transform="translate(1068,101) scale(0.92,1)" font-family="Liberation Sans" fill="#f4f4f4" stroke="#000" stroke-width="0.35" font-size="19" text-anchor="middle">3300</text><text transform="translate(1068,657.5) scale(0.92,1)" font-family="Liberation Sans" fill="#f4f4f4" stroke="#000" stroke-width="0.35" font-size="19" text-anchor="middle">3300</text><text transform="translate(522.5,189) rotate(-90) scale(0.92,1)" font-family="Liberation Sans" fill="#f4f4f4" stroke="#000" stroke-width="0.35" font-size="19" text-anchor="middle">1800</text><text transform="translate(522.5,230) rotate(-90) scale(0.92,1)" font-family="Liberation Sans" fill="#f4f4f4" stroke="#000" stroke-width="0.35" font-size="19" text-anchor="middle">900</text><text transform="translate(522.5,263.5) rotate(-90) scale(0.92,1)" font-family="Liberation Sans" fill="#f4f4f4" stroke="#000" stroke-width="0.35" font-size="19" text-anchor="middle">1300</text><text transform="translate(522.5,308.5) rotate(-90) scale(0.92,1)" font-family="Liberation Sans" fill="#f4f4f4" stroke="#000" stroke-width="0.35" font-size="19" text-anchor="middle">1700</text><text transform="translate(522.5,371) rotate(-90) scale(0.92,1)" font-family="Liberation Sans" fill="#f4f4f4" stroke="#000" stroke-width="0.35" font-size="19" text-anchor="middle">2400</text><text transform="translate(522.5,416) rotate(-90) scale(0.92,1)" font-family="Liberation Sans" fill="#f4f4f4" stroke="#000" stroke-width="0.35" font-size="19" text-anchor="middle">600</text><text transform="translate(522.5,484) rotate(-90) scale(0.92,1)" font-family="Liberation Sans" fill="#f4f4f4" stroke="#000" stroke-width="0.35" font-size="19" text-anchor="middle">3900</text><text transform="translate(522.5,562.5) rotate(-90) scale(0.92,1)" font-family="Liberation Sans" fill="#f4f4f4" stroke="#000" stroke-width="0.35" font-size="19" text-anchor="middle">1300</text><text transform="translate(477,373.5) rotate(-90) scale(0.92,1)" font-family="Liberation Sans" fill="#f4f4f4" stroke="#000" stroke-width="0.35" font-size="19" text-anchor="middle">13900</text><clipPath id="brn"><rect x="810" y="248" width="82" height="130"/></clipPath><text x="677" y="378" font-family="Liberation Sans" font-size="33" textLength="247" lengthAdjust="spacingAndGlyphs" fill="#1a3cb4" stroke="#ffc84d" stroke-width="0.45">ZTSGD-1 [14034]</text><g clip-path="url(#brn)"><text x="677" y="378" font-family="Liberation Sans" font-size="33" textLength="247" lengthAdjust="spacingAndGlyphs" fill="#9aafd0" stroke="#7f5b2e" stroke-width="0.45">ZTSGD-1 [14034]</text></g><text transform="translate(514,775.5) scale(0.85,1)" font-family="Liberation Sans" font-size="17" fill="#1ee01e" text-anchor="middle">Y</text><path d="M464,414 L478,420 Q480,421 480,423 L480,468 Q480,470 478,470.5 L464,476 Z" fill="#555"/><path d="M473.5,443 L469.5,447 L473.5,451" fill="none" stroke="#aaa" stroke-width="1"/></g></svg>
</body></html>
